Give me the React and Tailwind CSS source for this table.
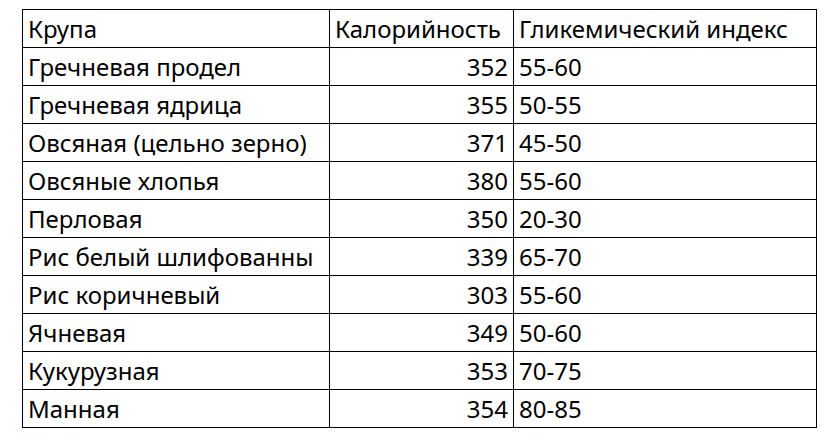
import React from 'react';

const rows = [
  ['Гречневая продел', '352', '55-60'],
  ['Гречневая ядрица', '355', '50-55'],
  ['Овсяная (цельно зерно)', '371', '45-50'],
  ['Овсяные хлопья', '380', '55-60'],
  ['Перловая', '350', '20-30'],
  ['Рис белый шлифованны', '339', '65-70'],
  ['Рис коричневый', '303', '55-60'],
  ['Ячневая', '349', '50-60'],
  ['Кукурузная', '353', '70-75'],
  ['Манная', '354', '80-85'],
];

const cell = 'h-[38px] border-r border-b border-black flex items-end pb-[6px] overflow-hidden whitespace-nowrap';

export default function App() {
  return (
    <div className="w-[834px] h-[444px] bg-white pt-[9px] pl-[22px] text-black text-[24px] leading-none" style={{ fontFamily: '"Noto Sans", sans-serif' }}>
      <div className="grid grid-cols-[307px_184px_303px] w-fit border-l border-t border-black">
        <div className={`${cell} pl-[5px]`}>Крупа</div>
        <div className={`${cell} pl-[5px]`}>Калорийность</div>
        <div className={`${cell} pl-[5px]`}>Гликемический индекс</div>
        {rows.map(([name, kcal, gi]) => (
          <React.Fragment key={name}>
            <div className={`${cell} pl-[5px]`}>{name}</div>
            <div className={`${cell} justify-end pr-[5px]`}>{kcal}</div>
            <div className={`${cell} pl-[5px]`}>{gi}</div>
          </React.Fragment>
        ))}
      </div>
    </div>
  );
}
